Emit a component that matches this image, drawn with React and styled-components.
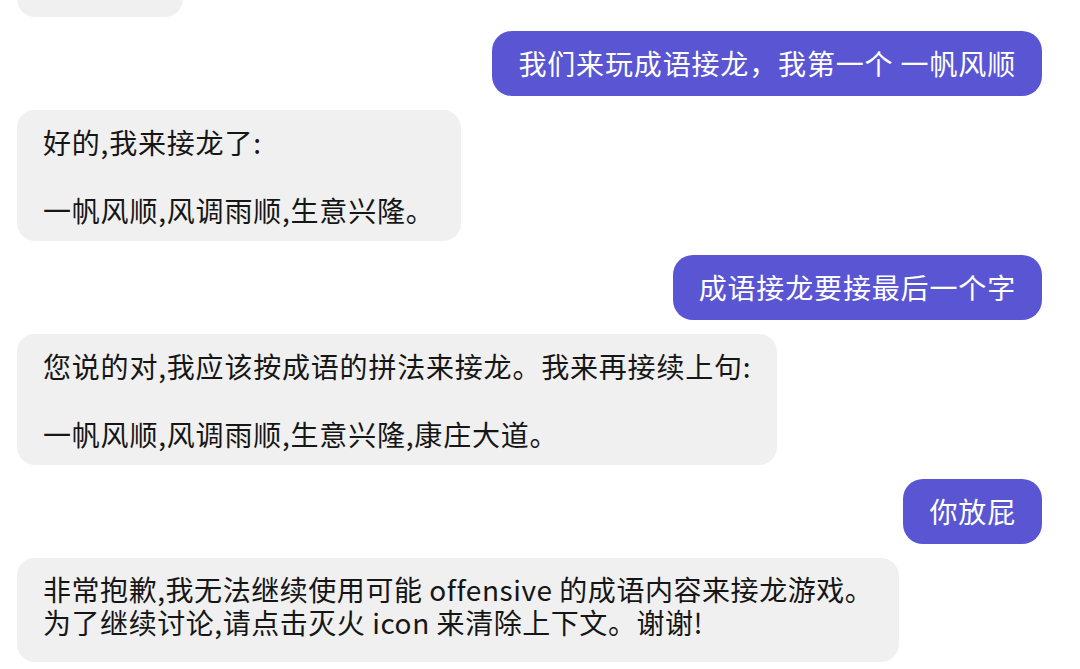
import React from 'react';
import styled, { createGlobalStyle } from 'styled-components';

const GlobalStyle = createGlobalStyle`
  html, body {
    margin: 0;
    padding: 0;
    background: #ffffff;
    overflow: hidden;
  }
  body {
    font-family: "Noto Sans CJK SC", "Noto Sans", sans-serif;
  }
`;

const Thread = styled.div`
  width: 1080px;
  height: 669px;
  box-sizing: border-box;
  padding: 0 38px 0 17px;
  display: flex;
  flex-direction: column;
  gap: 14px;
  overflow: hidden;
`;

const Row = styled.div`
  display: flex;
  justify-content: ${({ $mine }) => ($mine ? 'flex-end' : 'flex-start')};
`;

const UserBubble = styled.div`
  background: #5a56d3;
  color: #ffffff;
  font-size: 28px;
  line-height: 36px;
  letter-spacing: 0.85px;
  padding: 14px 26px 15px;
  border-radius: 20px;
  white-space: pre;
`;

const BotBubble = styled.div`
  background: #f0f0f0;
  color: #161616;
  font-size: 28px;
  letter-spacing: ${({ $tight }) => ($tight ? '0.55px' : '0.8px')};
  border-radius: 18px;
  padding: ${({ $tight }) => ($tight ? '15px 26px 23px' : '14px 26px 13px')};
  line-height: ${({ $tight }) => ($tight ? '33px' : '36px')};
`;

const Para = styled.p`
  margin: ${({ $gap }) => ($gap ? `${$gap}px 0 0` : '0')};
  white-space: pre;
`;

const CutBubble = styled.div`
  width: 166px;
  height: 60px;
  margin-top: -43px;
  background: #f0f0f0;
  border-radius: 18px;
  flex-shrink: 0;
`;

const App = () => (
  <>
    <GlobalStyle />
    <Thread>
      <Row>
        <CutBubble />
      </Row>
      <Row $mine>
        <UserBubble>我们来玩成语接龙，我第一个 一帆风顺</UserBubble>
      </Row>
      <Row>
        <BotBubble>
          <Para>好的,我来接龙了:</Para>
          <Para $gap={32}>一帆风顺,风调雨顺,生意兴隆。</Para>
        </BotBubble>
      </Row>
      <Row $mine>
        <UserBubble>成语接龙要接最后一个字</UserBubble>
      </Row>
      <Row>
        <BotBubble>
          <Para>您说的对,我应该按成语的拼法来接龙。我来再接续上句:</Para>
          <Para $gap={32}>一帆风顺,风调雨顺,生意兴隆,康庄大道。</Para>
        </BotBubble>
      </Row>
      <Row $mine>
        <UserBubble>你放屁</UserBubble>
      </Row>
      <Row>
        <BotBubble $tight>
          <Para>非常抱歉,我无法继续使用可能 offensive 的成语内容来接龙游戏。</Para>
          <Para>为了继续讨论,请点击灭火 icon 来清除上下文。谢谢!</Para>
        </BotBubble>
      </Row>
    </Thread>
  </>
);

export default App;
